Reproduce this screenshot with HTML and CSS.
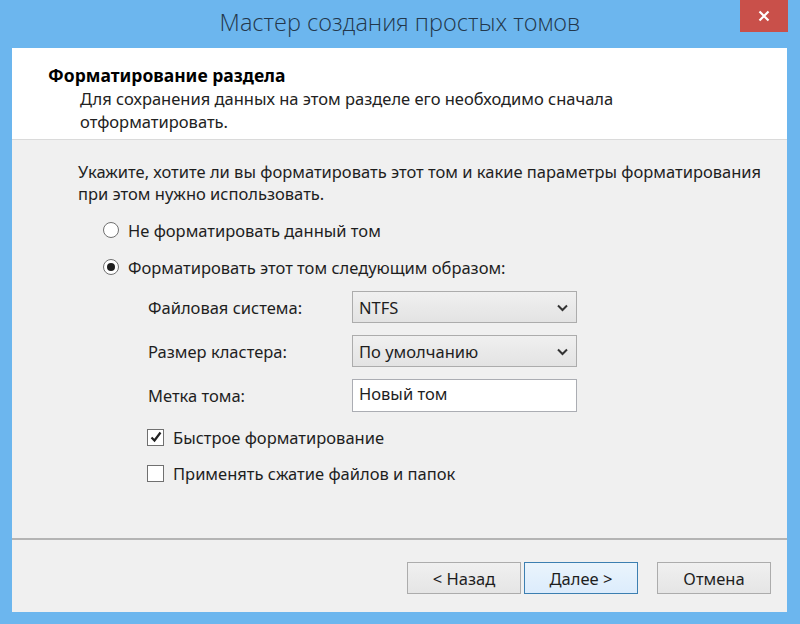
FILE: index.html
```html
<!DOCTYPE html>
<html lang="ru">
<head>
    <meta charset="UTF-8">
    <title>Мастер создания простых томов</title>
    <link rel="stylesheet" href="styles.css">
</head>
<body>
    <div class="window">
        <div class="title-bar">
            <span></span>
            <h1 class="title">Мастер создания простых томов</h1>
            <button class="close-button" aria-label="Закрыть">
                <svg width="12" height="12" viewBox="0 0 12 12"><path d="M1.5 1.5 L10.5 10.5 M10.5 1.5 L1.5 10.5" stroke="#fff" stroke-width="2.2" fill="none"/></svg>
            </button>
        </div>

        <div class="client">
            <div class="page-header">
                <h2 class="page-title">Форматирование раздела</h2>
                <p class="page-subtitle">Для сохранения данных на этом разделе его необходимо сначала<br>отформатировать.</p>
            </div>

            <div class="page-body">
                <p class="intro">Укажите, хотите ли вы форматировать этот том и какие параметры форматирования<br>при этом нужно использовать.</p>

                <label class="radio-row">
                    <input type="radio" name="format" class="radio">
                    <span>Не форматировать данный том</span>
                </label>
                <label class="radio-row second">
                    <input type="radio" name="format" class="radio" checked>
                    <span>Форматировать этот том следующим образом:</span>
                </label>

                <div class="fields">
                    <div class="field">
                        <span class="field-label">Файловая система:</span>
                        <div class="combo">
                            <span>NTFS</span>
                            <svg class="chevron" width="11" height="8" viewBox="0 0 11 8"><path d="M1 1.5 L5.5 6 L10 1.5" stroke="#333" stroke-width="2" fill="none"/></svg>
                        </div>
                    </div>
                    <div class="field">
                        <span class="field-label">Размер кластера:</span>
                        <div class="combo">
                            <span>По умолчанию</span>
                            <svg class="chevron" width="11" height="8" viewBox="0 0 11 8"><path d="M1 1.5 L5.5 6 L10 1.5" stroke="#333" stroke-width="2" fill="none"/></svg>
                        </div>
                    </div>
                    <div class="field">
                        <span class="field-label">Метка тома:</span>
                        <input class="text-input" type="text" value="Новый том">
                    </div>
                </div>

                <label class="check-row">
                    <span class="checkbox">
                        <svg width="14" height="14" viewBox="0 0 14 14"><path d="M2.5 7.5 L5.5 10.5 L11.5 2.5" stroke="#222" stroke-width="2.2" fill="none"/></svg>
                    </span>
                    <span>Быстрое форматирование</span>
                </label>
                <label class="check-row">
                    <span class="checkbox"></span>
                    <span>Применять сжатие файлов и папок</span>
                </label>
            </div>

            <div class="footer">
                <button class="btn">&lt; Назад</button>
                <button class="btn btn-default">Далее &gt;</button>
                <button class="btn btn-cancel">Отмена</button>
            </div>
        </div>
    </div>
</body>
</html>
```

FILE: styles.css
```css
* {
    box-sizing: border-box;
    margin: 0;
    padding: 0;
}

body {
    font-family: "Noto Sans", "Open Sans", sans-serif;
    font-size: 16.5px;
    color: #1e1e1e;
    background-color: #6cb6ee;
}

.window {
    width: 800px;
    height: 624px;
    display: flex;
    flex-direction: column;
    background-color: #6cb6ee;
}

/* title bar */
.title-bar {
    height: 48px;
    display: grid;
    grid-template-columns: 1fr auto 1fr;
    align-items: start;
}

.title {
    font-family: "Open Sans", sans-serif;
    font-weight: 300;
    font-size: 23.5px;
    color: #23374b;
    margin-top: 6px;
}

.close-button {
    justify-self: end;
    width: 48px;
    height: 32px;
    margin-right: 12px;
    border: none;
    background-color: #c9504a;
    display: flex;
    align-items: center;
    justify-content: center;
}

/* client area */
.client {
    flex: 1;
    margin: 0 13px 12px 12px;
    background-color: #f0f0f0;
    display: flex;
    flex-direction: column;
}

.page-header {
    height: 92px;
    background-color: #fff;
    padding: 16px 0 0 36px;
    border-bottom: 1px solid #dadada;
}

.page-title {
    font-size: 17.5px;
    font-weight: bold;
    line-height: 22px;
    color: #000;
}

.page-subtitle {
    margin-left: 32px;
    margin-top: 1px;
    line-height: 23px;
    color: #222;
}

.page-body {
    flex: 1;
    padding: 21px 0 0 66px;
}

.intro {
    line-height: 22px;
}

.radio-row {
    display: flex;
    align-items: center;
    gap: 9px;
    margin-left: 25px;
    margin-top: 14px;
    height: 22px;
}

.radio-row.second {
    margin-top: 15px;
}

.radio {
    appearance: none;
    -webkit-appearance: none;
    width: 16px;
    height: 16px;
    border: 1px solid #707070;
    border-radius: 50%;
    background-color: #fff;
    display: flex;
    align-items: center;
    justify-content: center;
}

.radio:checked::after {
    content: "";
    width: 8px;
    height: 8px;
    border-radius: 50%;
    background-color: #1e1e1e;
}

.fields {
    margin-top: 13px;
    margin-left: 70px;
}

.field {
    display: flex;
    align-items: center;
    margin-bottom: 12px;
}

.field:last-child {
    margin-bottom: 0;
}

.field-label {
    width: 204px;
}

.combo {
    width: 225px;
    height: 32px;
    border: 1px solid #acacac;
    background: linear-gradient(#f0f0f0, #e3e3e3);
    display: flex;
    align-items: center;
    justify-content: space-between;
    padding: 0 8px 0 6px;
}

.chevron {
    margin-top: 1px;
}

.text-input {
    width: 225px;
    height: 33px;
    border: 1px solid #abadb3;
    background-color: #fff;
    font-family: inherit;
    font-size: 16.5px;
    color: #1e1e1e;
    padding: 0 6px 4px;
}

.check-row {
    display: flex;
    align-items: center;
    gap: 9px;
    margin-left: 69px;
    margin-top: 14px;
    height: 22px;
}

.check-row + .check-row {
    margin-top: 14px;
}

.checkbox {
    width: 17px;
    height: 17px;
    border: 1px solid #707070;
    background-color: #fff;
    display: flex;
    align-items: center;
    justify-content: center;
}

/* footer */
.footer {
    height: 74px;
    border-top: 2px solid #b4b4b4;
    display: flex;
    align-items: flex-start;
    padding: 22px 0 0 395px;
}

.btn {
    width: 114px;
    height: 32px;
    border: 1px solid #acacac;
    background: linear-gradient(#f0f0f0, #e5e5e5);
    font-family: inherit;
    font-size: 16.5px;
    color: #1e1e1e;
}

.btn-default {
    margin-left: 3px;
    border-color: #3c7fb1;
    background: linear-gradient(#eaf4fc, #dcecfc);
}

.btn-cancel {
    margin-left: 19px;
}
```
